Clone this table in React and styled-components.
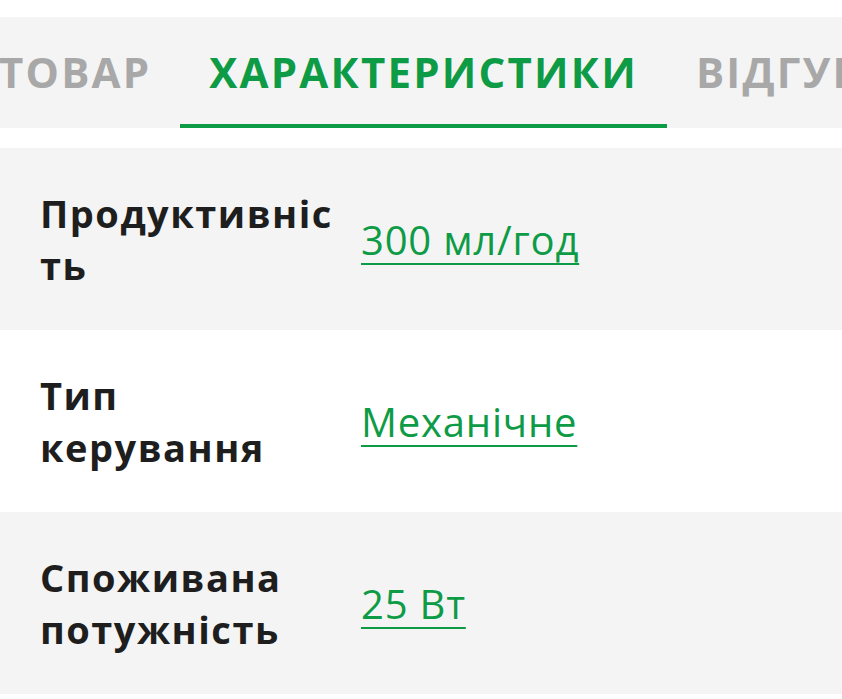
import React from "react";
import styled, { createGlobalStyle } from "styled-components";

const GlobalStyle = createGlobalStyle`
  body {
    margin: 0;
    background: #ffffff;
    font-family: "Open Sans", "Noto Sans", sans-serif;
  }
`;

const tabs = [
  { id: "product", label: "Товар" },
  { id: "specs", label: "Характеристики", active: true },
  { id: "reviews", label: "Відгуки" },
];

const specs = [
  { name: "Продуктивність", value: "300 мл/год" },
  { name: "Тип керування", value: "Механічне" },
  { name: "Споживана потужність", value: "25 Вт" },
];

const App = () => {
  return (
    <Page>
      <GlobalStyle />
      <TabBar>
        <TabTrack>
          {tabs.map((tab) => (
            <Tab key={tab.id} $active={tab.active}>
              {tab.label}
            </Tab>
          ))}
        </TabTrack>
      </TabBar>

      <SpecList>
        {specs.map((spec, i) => (
          <SpecRow key={spec.name} $striped={i % 2 === 0}>
            <SpecName>{spec.name}</SpecName>
            <SpecValue href="#">{spec.value}</SpecValue>
          </SpecRow>
        ))}
      </SpecList>
    </Page>
  );
};

const Page = styled.div`
  padding-top: 17px;
  overflow: hidden;
`;

const TabBar = styled.nav`
  background: #f4f4f4;
  height: 111px;
  overflow: hidden;
`;

const TabTrack = styled.div`
  display: flex;
  height: 100%;
  margin-left: -30px;
  white-space: nowrap;
`;

const Tab = styled.div`
  display: flex;
  align-items: center;
  padding: 0 29px 2px;
  font-size: 42px;
  font-weight: 700;
  letter-spacing: 2.2px;
  text-transform: uppercase;
  color: ${(p) => (p.$active ? "#0e9b46" : "#a8a8a8")};
  box-shadow: ${(p) => (p.$active ? "inset 0 -4px 0 #0e9b46" : "none")};
  flex-shrink: 0;
`;

const SpecList = styled.div`
  margin-top: 20px;
  display: flex;
  flex-direction: column;
`;

const SpecRow = styled.div`
  display: grid;
  grid-template-columns: 300px 1fr;
  column-gap: 21px;
  align-items: center;
  min-height: 182px;
  padding: 0 40px;
  box-sizing: border-box;
  background: ${(p) => (p.$striped ? "#f4f4f4" : "#ffffff")};
`;

const SpecName = styled.div`
  font-size: 38px;
  font-weight: 700;
  letter-spacing: 1.5px;
  line-height: 52px;
  color: #1e1e1e;
  overflow-wrap: anywhere;
`;

const SpecValue = styled.a`
  justify-self: start;
  font-size: 40px;
  font-weight: 400;
  letter-spacing: 0.8px;
  color: #0e9b46;
  text-decoration: underline;
  text-decoration-thickness: 2px;
  text-underline-offset: 8px;
`;

export default App;
